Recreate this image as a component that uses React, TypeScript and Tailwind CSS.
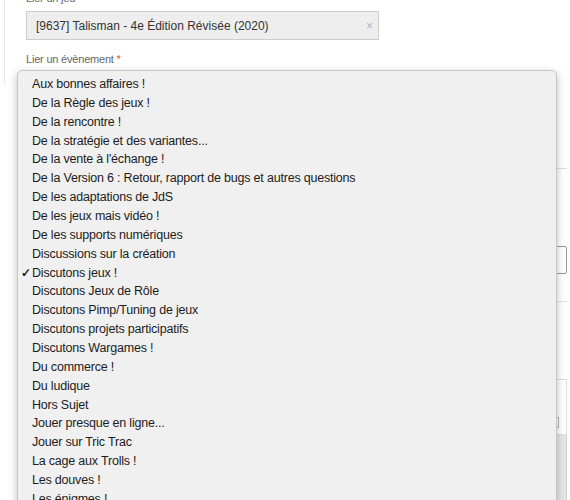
import React from "react";

const items = [
  "Aux bonnes affaires !",
  "De la Règle des jeux !",
  "De la rencontre !",
  "De la stratégie et des variantes...",
  "De la vente à l'échange !",
  "De la Version 6 : Retour, rapport de bugs et autres questions",
  "De les adaptations de JdS",
  "De les jeux mais vidéo !",
  "De les supports numériques",
  "Discussions sur la création",
  "Discutons jeux !",
  "Discutons Jeux de Rôle",
  "Discutons Pimp/Tuning de jeux",
  "Discutons projets participatifs",
  "Discutons Wargames !",
  "Du commerce !",
  "Du ludique",
  "Hors Sujet",
  "Jouer presque en ligne...",
  "Jouer sur Tric Trac",
  "La cage aux Trolls !",
  "Les douves !",
  "Les énigmes !",
  "Les grandes questions",
];

export default function App() {
  return (
    <div
      className="relative w-[570px] h-[500px] overflow-hidden bg-white"
      style={{ fontFamily: '"Liberation Sans", Arial, sans-serif' }}
    >
      {/* background form */}
      <div className="ml-[4px] border-l border-[#e8e8e8] pl-[21px] pr-[3px] pt-0 h-[92px] w-[378px]">
        <div className="mt-[-8px] text-[11px] leading-[13px] tracking-[-0.2px] text-[#666]">
          Lier un jeu <span className="text-[#e4572e]">*</span>
        </div>
        <div className="mt-[6px] flex h-[29px] w-[353px] items-center justify-between border border-[#cccccc] bg-[#eeeeee] pl-[9px] pr-[5px] text-[12px] text-[#333]">
          <span>[9637] Talisman - 4e Édition Révisée (2020)</span>
          <span className="text-[12px] text-[#a9b7c6]">×</span>
        </div>
        <div className="mt-[12px] text-[11px] leading-[14px] tracking-[-0.2px] text-[#666]">
          Lier un évènement <span className="text-[#e4572e]">*</span>
        </div>
        <div className="mt-[4px] h-[29px] w-[353px] border border-[#cccccc] bg-white" />
      </div>

      <div className="ml-[26px] mr-[3px]">
        <div className="mt-[84px] border-t border-[#dddddd]" />
        <div className="mt-[77px] flex h-[28px] items-center justify-end rounded-[2px] border border-[#999] bg-white pr-[7px] text-[8px] text-[#444]">
          ▼
        </div>
        <div className="mt-[27px] border-t border-[#e3e3e3]" />
        <div className="mt-[77px] h-[56px] border border-[#dddddd] bg-white pt-[37px] pr-[7px]">
          <div className="h-[11px] border border-[#bbbbbb] bg-white" />
        </div>
        <div className="h-[80px] border-x border-[#d0d0d0] bg-[#e6e6e6]" />
      </div>

      {/* dropdown menu overlay */}
      <div className="absolute left-[17px] top-[70px] w-[540px] h-[460px] rounded-[5px] border border-[#c6c6c6] bg-[#f0f0f0] pt-[4px] shadow-[0_3px_8px_rgba(0,0,0,0.25)]">
        {items.map((t) => (
          <div
            key={t}
            className="relative h-[18.86px] pl-[14px] text-[12.5px] leading-[18.86px] tracking-[-0.2px] text-[#1c1c1c] whitespace-nowrap"
          >
            {t === "Discutons jeux !" && (
              <span className="absolute left-[3px] top-0 text-[12px] font-bold">✓</span>
            )}
            {t}
          </div>
        ))}
      </div>
    </div>
  );
}
